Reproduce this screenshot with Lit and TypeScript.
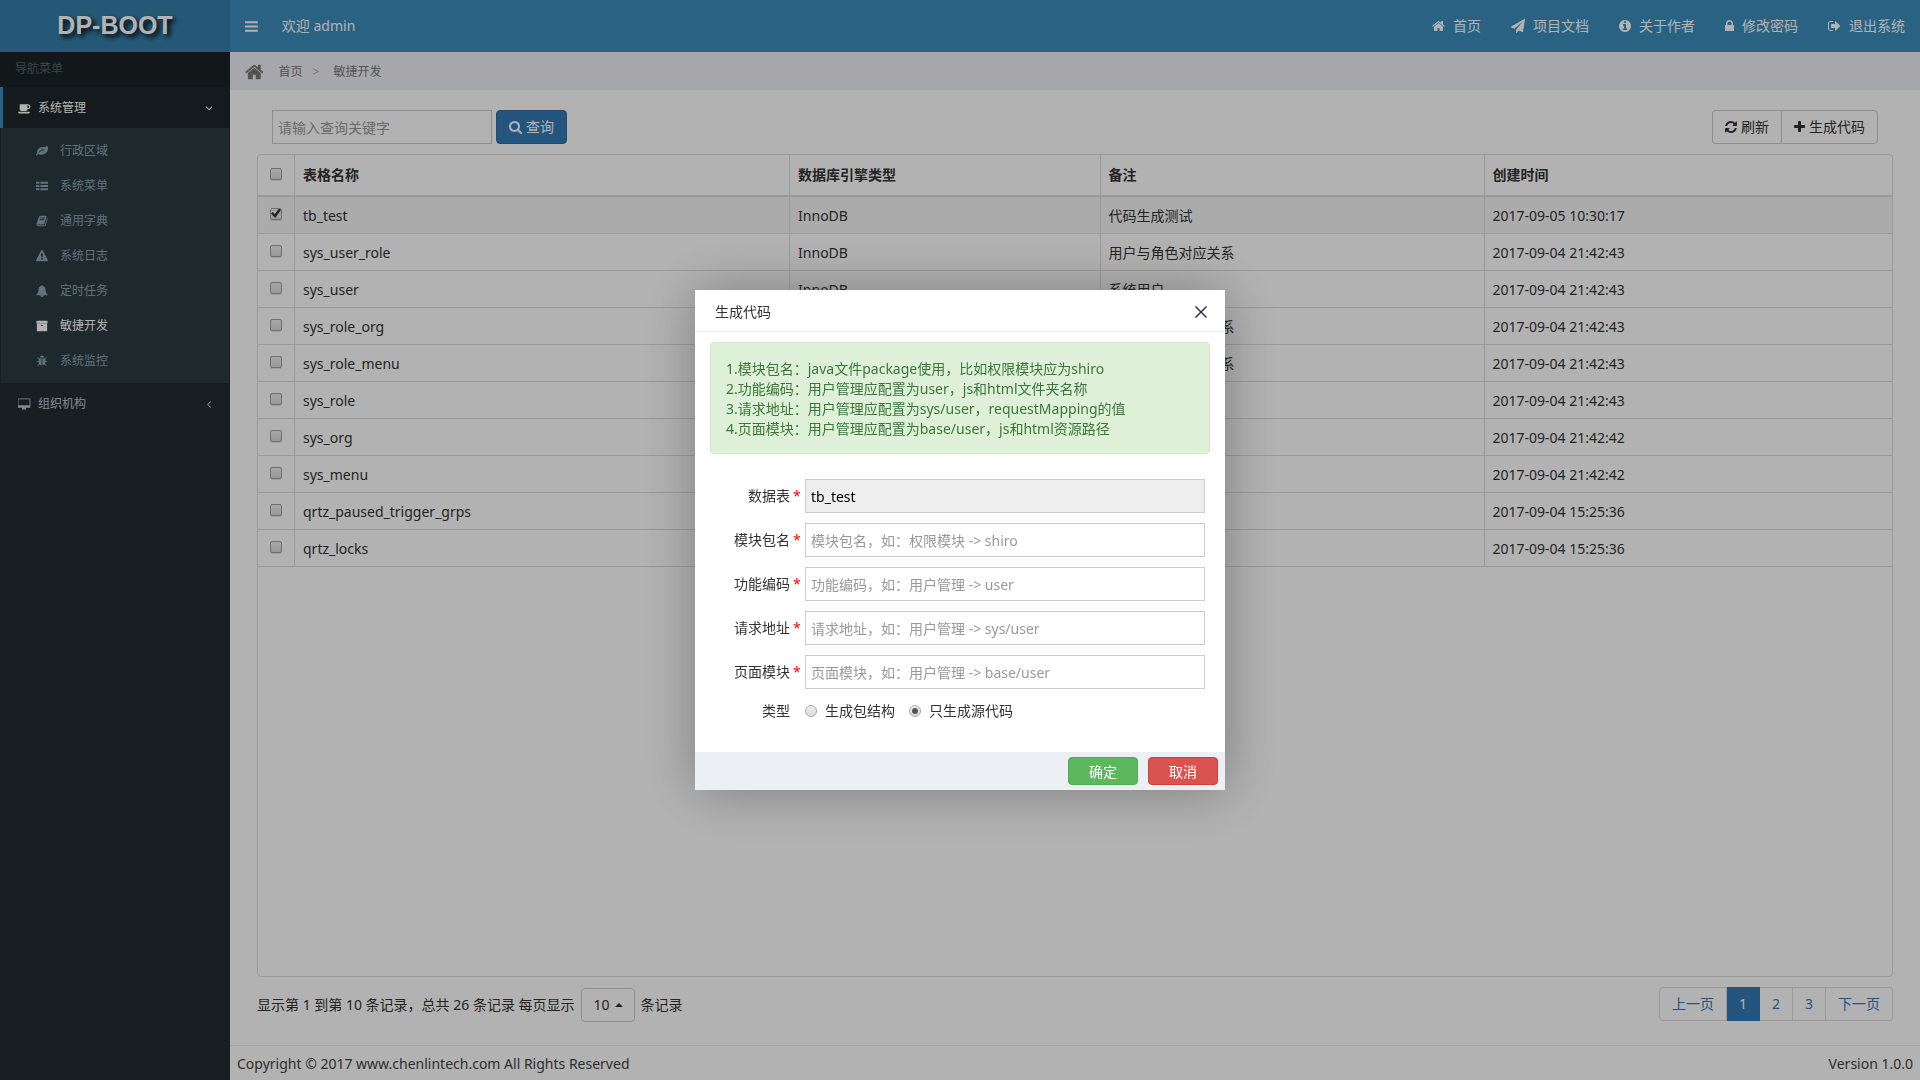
import { LitElement, html, svg, css } from "lit";
import { customElement, property, state } from "lit/decorators.js";
import { classMap } from "lit/directives/class-map.js";

interface Glyph {
  box: string;
  d: string;
}

const SQ = "0 0 1792 1792";
const W13 = "64 0 1664 1792";
const W12 = "128 0 1536 1792";
const WIDE = "0 -64 1920 1792";

const GLYPHS: Record<string, Glyph> = {
  home: { box: W13, d: "M1472 992v480q0 26-19 45t-45 19h-384v-384h-256v384h-384q-26 0-45-19t-19-45v-480q0-1 .5-3t.5-3l575-474 575 474q1 2 1 6zm223-69l-62 74q-8 9-21 11h-3q-13 0-21-7l-692-577-692 577q-12 8-24 7-13-2-21-11l-62-74q-8-10-7-23.5t11-21.5l719-599q32-26 76-26t76 26l244 204v-195q0-14 9-23t23-9h192q14 0 23 9t9 23v408l219 182q10 8 11 21.5t-7 23.5z" },
  bars: { box: W12, d: "M1664 1344v128q0 26-19 45t-45 19h-1408q-26 0-45-19t-19-45v-128q0-26 19-45t45-19h1408q26 0 45 19t19 45zm0-512v128q0 26-19 45t-45 19h-1408q-26 0-45-19t-19-45v-128q0-26 19-45t45-19h1408q26 0 45 19t19 45zm0-512v128q0 26-19 45t-45 19h-1408q-26 0-45-19t-19-45v-128q0-26 19-45t45-19h1408q26 0 45 19t19 45z" },
  plane: { box: SQ, d: "M1764 11q33 24 27 64l-256 1536q-5 29-32 45-14 8-31 8-11 0-24-5l-453-185-242 295q-18 23-49 23-13 0-22-4-19-7-30.5-23.5t-11.5-36.5v-349l864-1059-1069 925-395-162q-37-14-40-55-2-40 32-59l1664-960q15-9 32-9 20 0 36 11z" },
  info: { box: W12, d: "M1152 1376v-160q0-14-9-23t-23-9h-96v-512q0-14-9-23t-23-9h-320q-14 0-23 9t-9 23v160q0 14 9 23t23 9h96v320h-96q-14 0-23 9t-9 23v160q0 14 9 23t23 9h448q14 0 23-9t9-23zm-128-896v-160q0-14-9-23t-23-9h-192q-14 0-23 9t-9 23v160q0 14 9 23t23 9h192q14 0 23-9t9-23zm640 416q0 209-103 385.5t-279.5 279.5-385.5 103-385.5-103-279.5-279.5-103-385.5 103-385.5 279.5-279.5 385.5-103 385.5 103 279.5 279.5 103 385.5z" },
  lock: { box: "320 0 1152 1792", d: "M640 768h512v-192q0-106-75-181t-181-75-181 75-75 181v192zm832 96v576q0 40-28 68t-68 28h-960q-40 0-68-28t-28-68v-576q0-40 28-68t68-28h32v-192q0-184 132-316t316-132 316 132 132 316v192h32q40 0 68 28t28 68z" },
  exit: { box: W13, d: "M704 1440q0 4 1 20t.5 26.5-3 23.5-10 19.5-20.5 6.5h-320q-119 0-203.5-84.5t-84.5-203.5v-704q0-119 84.5-203.5t203.5-84.5h320q13 0 22.5 9.5t9.5 22.5q0 4 1 20t.5 26.5-3 23.5-10 19.5-20.5 6.5h-320q-66 0-113 47t-47 113v704q0 66 47 113t113 47h312l11.5 1 11.5 3 8 5.5 7 9 2 13.5zm928-544q0 26-19 45l-544 544q-19 19-45 19t-45-19-19-45v-288h-448q-26 0-45-19t-19-45v-384q0-26 19-45t45-19h448v-288q0-26 19-45t45-19 45 19l544 544q19 19 19 45z" },
  search: { box: W13, d: "M1216 832q0-185-131.5-316.5t-316.5-131.5-316.5 131.5-131.5 316.5 131.5 316.5 316.5 131.5 316.5-131.5 131.5-316.5zm512 832q0 52-38 90t-90 38q-54 0-90-38l-343-342q-179 124-399 124-143 0-273.5-55.5t-225-150-150-225-55.5-273.5 55.5-273.5 150-225 225-150 273.5-55.5 273.5 55.5 225 150 150 225 55.5 273.5q0 220-124 399l343 343q37 37 37 90z" },
  refresh: { box: W12, d: "M1639 1056q0 5-1 7-64 268-268 434.5t-478 166.5q-146 0-282.5-55t-243.5-157l-129 129q-19 19-45 19t-45-19-19-45v-448q0-26 19-45t45-19h448q26 0 45 19t19 45-19 45l-137 137q71 66 161 102t187 36q134 0 250-65t186-179q11-17 53-117 8-23 30-23h192q13 0 22.5 9.5t9.5 22.5zm25-800v448q0 26-19 45t-45 19h-448q-26 0-45-19t-19-45 19-45l138-138q-148-137-349-137-134 0-250 65t-186 179q-11 17-53 117-8 23-30 23h-199q-13 0-22.5-9.5t-9.5-22.5v-7q65-268 270-434.5t480-166.5q146 0 284 55.5t245 156.5l130-129q19-19 45-19t45 19 19 45z" },
  plus: { box: "192 0 1408 1792", d: "M1600 736v192q0 40-28 68t-68 28h-416v416q0 40-28 68t-68 28h-192q-40 0-68-28t-28-68v-416h-416q-40 0-68-28t-28-68v-192q0-40 28-68t68-28h416v-416q0-40 28-68t68-28h192q40 0 68 28t28 68v416h416q40 0 68 28t28 68z" },
  coffee: { box: WIDE, d: "M1664 640q0-80-56-136t-136-56h-64v384h64q80 0 136-56t56-136zm-1664 768h1792q0 106-75 181t-181 75h-1280q-106 0-181-75t-75-181zm1856-768q0 159-112.5 271.5t-271.5 112.5h-64v32q0 92-66 158t-158 66h-704q-92 0-158-66t-66-158v-736q0-26 19-45t45-19h1152q159 0 271.5 112.5t112.5 271.5z" },
  desktop: { box: WIDE, d: "M1728 992v-832q0-13-9.5-22.5t-22.5-9.5h-1600q-13 0-22.5 9.5t-9.5 22.5v832q0 13 9.5 22.5t22.5 9.5h1600q13 0 22.5-9.5t9.5-22.5zm128-832v1088q0 66-47 113t-113 47h-544q0 37 16 77.5t32 71 16 43.5q0 26-19 45t-45 19h-512q-26 0-45-19t-19-45q0-14 16-44t32-70 16-78h-544q-66 0-113-47t-47-113v-1088q0-66 47-113t113-47h1600q66 0 113 47t47 113z" },
  leaf: { box: SQ, d: "M1280 704q0-26-19-45t-45-19q-172 0-318 49.5t-259.5 134-235.5 219.5q-19 21-19 45 0 26 19 45t45 19q24 0 45-19 27-24 74-71t67-66q137-124 268.5-176t313.5-52q26 0 45-19t19-45zm512-198q0 95-20 193-46 224-184.5 383t-357.5 268q-214 108-438 108-148 0-286-47-15-5-88-42t-96-37q-16 0-39.5 32t-45 70-52.5 70-60 32q-43 0-63.5-17.5t-45.5-59.5q-2-4-6-11t-5.5-10-3-9.5-1.5-13.5q0-35 31-73.5t68-65.5 68-56 31-48q0-4-14-38t-16-44q-9-51-9-104 0-115 43.5-220t119-184.5 170.5-139 204-95.5q55-18 145-25.5t179.5-9 178.5-6 163.5-24 113.5-56.5l29.5-29.5 29.5-28 27-20 36.5-16 43.5-4.5q39 0 70.5 46t47.5 112 24 124 8 96z" },
  list: { box: SQ, d: "M0 256h512v320h-512zM640 256h1152v320h-1152zM0 736h512v320h-512zM640 736h1152v320h-1152zM0 1216h512v320h-512zM640 1216h1152v320h-1152z" },
  book: { box: SQ, d: "M1703 478q40 57 18 129l-275 906q-19 64-76.5 107.5t-122.5 43.5h-923q-77 0-148.5-53.5t-99.5-131.5q-24-67-2-127 0-4 3-27t4-37q1-8-3-21.5t-3-19.5q2-11 8-21t16.5-23.5 16.5-23.5q23-38 45-91.5t30-91.5q3-10 .5-30t-.5-28q3-11 17-28t17-23q21-36 42-92t25-90q1-9-2.5-32t.5-28q4-13 22-30.5t22-22.5q19-26 42.5-84.5t27.5-96.5q1-8-3-25.5t-2-26.5q2-8 9-18t18-23 17-21q8-12 16.5-30.5t15-35 16-36 19.5-32 26.5-23.5 36-11.5 47.5 5.5l-1 3q38-9 51-9h761q74 0 114 56t18 130l-274 906q-36 119-71.5 153.5t-128.5 34.5h-869q-27 0-38 15-11 16-1 43 24 70 144 70h923q29 0 56-15.5t35-41.5l300-987q7-22 5-57 38 15 59 43zm-1064 2q-4 13 2 22.5t20 9.5h608q13 0 25.5-9.5t16.5-22.5l21-64q4-13-2-22.5t-20-9.5h-608q-13 0-25.5 9.5t-16.5 22.5zm-83 256q-4 13 2 22.5t20 9.5h608q13 0 25.5-9.5t16.5-22.5l21-64q4-13-2-22.5t-20-9.5h-608q-13 0-25.5 9.5t-16.5 22.5z" },
  warning: { box: SQ, d: "M1024 1375v-190q0-14-9.5-23.5t-22.5-9.5h-192q-13 0-22.5 9.5t-9.5 23.5v190q0 14 9.5 23.5t22.5 9.5h192q13 0 22.5-9.5t9.5-23.5zm-2-374l18-459q0-12-10-19-13-11-24-11h-220q-11 0-24 11-10 7-10 21l17 457q0 10 10 16.5t24 6.5h185q14 0 23.5-6.5t10.5-16.5zm-14-934l768 1408q35 63-2 126-17 29-46.5 46t-63.5 17h-1536q-34 0-63.5-17t-46.5-46q-37-63-2-126l768-1408q17-31 47-49t65-18 65 18 47 49z" },
  bell: { box: SQ, d: "M912 1696q0-16-16-16-59 0-101.5-42.5t-42.5-101.5q0-16-16-16t-16 16q0 73 51.5 124.5t124.5 51.5q16 0 16-16zm816-288q0 52-38 90t-90 38h-448q0 106-75 181t-181 75-181-75-75-181h-448q-52 0-90-38t-38-90q50-42 91-88t85-119.5 74.5-158.5 50-206 19.5-260q0-152 117-282.5t307-158.5q-8-19-8-39 0-40 28-68t68-28 68 28 28 68q0 20-8 39 190 28 307 158.5t117 282.5q0 139 19.5 260t50 206 74.5 158.5 85 119.5 91 88z" },
  archive: { box: SQ, d: "M1088 832q0-26-19-45t-45-19h-256q-26 0-45 19t-19 45 19 45 45 19h256q26 0 45-19t19-45zm576-192v960q0 26-19 45t-45 19h-1408q-26 0-45-19t-19-45v-960q0-26 19-45t45-19h1408q26 0 45 19t19 45zm64-448v256q0 26-19 45t-45 19h-1536q-26 0-45-19t-19-45v-256q0-26 19-45t45-19h1536q26 0 45 19t19 45z" },
  bug: { box: SQ, d: "M1696 960q0 26-19 45t-45 19h-224q0 171-67 290l208 209q19 19 19 45t-19 45q-18 19-45 19t-45-19l-198-197q-5 5-15 13t-42 28.5-65 36.5-82 29-97 13v-896h-128v896q-51 0-101.5-13.5t-87-33-66-39-43.5-32.5l-15-14-183 207q-20 21-48 21-24 0-43-16-19-18-20.5-44.5t15.5-46.5l202-227q-58-114-58-274h-224q-26 0-45-19t-19-45 19-45 45-19h224v-294l-173-173q-19-19-19-45t19-45 45-19 45 19l173 173h844l173-173q19-19 45-19t45 19 19 45-19 45l-173 173v294h224q26 0 45 19t19 45zm-480-576h-640q0-133 93.5-226.5t226.5-93.5 226.5 93.5 93.5 226.5z" },
  down: { box: SQ, d: "M1395 736q0 13-10 23l-466 466q-10 10-23 10t-23-10l-466-466q-10-10-10-23t10-23l50-50q10-10 23-10t23 10l393 393 393-393q10-10 23-10t23 10l50 50q10 10 10 23z" },
  left: { box: SQ, d: "M1203 544q0 13-10 23l-393 393 393 393q10 10 10 23t-10 23l-50 50q-10 10-23 10t-23-10l-466-466q-10-10-10-23t10-23l466-466q10-10 23-10t23 10l50 50q10 10 10 23z" },
  close: { box: "0 0 12 12", d: "M0 1L1 0L6 5L11 0L12 1L7 6L12 11L11 12L6 7L1 12L0 11L5 6Z" },
  caret: { box: "0 0 8 4", d: "M0 4L4 0L8 4Z" },
};

@customElement("ui-icon")
export class UiIcon extends LitElement {
  static styles = css`
    :host {
      display: inline-flex;
      flex: none;
      justify-content: center;
      height: 14px;
    }
    .glyph {
      flex: none;
      height: 100%;
      fill: currentColor;
    }
  `;

  @property() name = "";

  render() {
    const g = GLYPHS[this.name];
    return html`<svg class="glyph" viewBox=${g.box} aria-hidden="true">${svg`<path d=${g.d}></path>`}</svg>`;
  }
}

const TEXT_FONT = css`"Noto Sans", "Noto Sans CJK SC", sans-serif`;

@customElement("app-sidebar")
export class AppSidebar extends LitElement {
  static styles = css`
    :host {
      display: flex;
      flex-direction: column;
      background: #222d32;
      color: #b8c7ce;
      font: 12px/20px ${TEXT_FONT};
    }
    .logo {
      height: 52px;
      background: #367fa9;
      color: #fff;
      font: bold 25px/50px "Liberation Sans", sans-serif;
      text-align: center;
      text-decoration: none;
      text-shadow: 3px 3px 5px #000;
    }
    .caption {
      padding: 7px 15px 8px;
      background: #1a2226;
      color: #4b646f;
    }
    .group {
      display: flex;
      align-items: center;
      gap: 7px;
      padding: 11px 15px 10px;
      border-left: 3px solid transparent;
      color: inherit;
      text-decoration: none;
    }
    .group.open {
      background: #1e282c;
      border-left-color: #3c8dbc;
      color: #fff;
    }
    .fold {
      height: 12px;
      margin-left: auto;
    }
    .items {
      margin: 0 1px;
      padding: 5px 0;
      list-style: none;
      background: #2c3b41;
    }
    .item {
      display: flex;
      align-items: center;
      gap: 11px;
      height: 35px;
      padding-left: 34px;
      color: #8aa4af;
      text-decoration: none;
    }
    .item.active {
      color: #fff;
    }
    .mark {
      width: 13px;
      height: 12px;
    }
    .small {
      width: 14px;
      height: 12px;
    }
  `;

  private items = [
    ["leaf", "行政区域"],
    ["list", "系统菜单"],
    ["book", "通用字典"],
    ["warning", "系统日志"],
    ["bell", "定时任务"],
    ["archive", "敏捷开发"],
    ["bug", "系统监控"],
  ];

  render() {
    return html`
      <a class="logo" href="#">DP-BOOT</a>
      <div class="caption">导航菜单</div>
      <nav>
        <a class="group open" href="#"><ui-icon class="mark" name="coffee"></ui-icon>系统管理<ui-icon class="fold" name="down"></ui-icon></a>
        <ul class="items">
          ${this.items.map(
            ([icon, label]) => html`<li>
              <a class=${classMap({ item: true, active: label === "敏捷开发" })} href="#"><ui-icon class="small" name=${icon}></ui-icon>${label}</a>
            </li>`,
          )}
        </ul>
        <a class="group" href="#"><ui-icon class="mark" name="desktop"></ui-icon>组织机构<ui-icon class="fold" name="left"></ui-icon></a>
      </nav>
    `;
  }
}

@customElement("app-topbar")
export class AppTopbar extends LitElement {
  static styles = css`
    :host {
      display: flex;
      align-items: center;
      height: 52px;
      padding: 0 15px;
      background: #3c8dbc;
      color: #fff;
      font: 14px/20px ${TEXT_FONT};
    }
    .toggle {
      display: flex;
      margin: 0 24px 0 0;
      padding: 0;
      border: 0;
      background: none;
      color: inherit;
    }
    .burger {
      height: 15px;
    }
    .links {
      display: flex;
      gap: 30px;
      margin-left: auto;
    }
    .link {
      display: flex;
      align-items: center;
      gap: 8px;
      color: inherit;
      text-decoration: none;
    }
  `;

  private links = [
    ["home", "首页"],
    ["plane", "项目文档"],
    ["info", "关于作者"],
    ["lock", "修改密码"],
    ["exit", "退出系统"],
  ];

  render() {
    return html`
      <button class="toggle" type="button" aria-label="菜单"><ui-icon class="burger" name="bars"></ui-icon></button>
      <span>欢迎 admin</span>
      <nav class="links">
        ${this.links.map(([icon, label]) => html`<a class="link" href="#"><ui-icon name=${icon}></ui-icon>${label}</a>`)}
      </nav>
    `;
  }
}

interface Row {
  name: string;
  note: string;
  time: string;
}

@customElement("table-list")
export class TableList extends LitElement {
  static styles = css`
    :host {
      display: flex;
      flex-direction: column;
      gap: 10px;
      padding: 20px 27px 22px;
      color: #333;
      font: 14px/20px ${TEXT_FONT};
    }
    .bar {
      display: flex;
      align-items: center;
      gap: 4px;
      padding: 0 15px;
    }
    .query {
      box-sizing: border-box;
      width: 220px;
      height: 34px;
      padding: 0 5px;
      border: 1px solid #ccc;
      background: #fff;
      font: inherit;
    }
    .query::placeholder {
      color: #999;
    }
    .btn {
      display: flex;
      align-items: center;
      gap: 4px;
      height: 34px;
      padding: 0 12px;
      border: 1px solid #ccc;
      background: #fff;
      color: #333;
      font: inherit;
    }
    .btn.primary {
      border-color: #2e6da4;
      border-radius: 4px;
      background: #337ab7;
      color: #fff;
    }
    .tools {
      display: flex;
      margin-left: auto;
    }
    .btn.first {
      border-right: 0;
      border-radius: 4px 0 0 4px;
    }
    .btn.last {
      border-radius: 0 4px 4px 0;
    }
    .panel {
      flex: 1;
      border: 1px solid #ddd;
      border-radius: 4px;
    }
    .grid {
      width: 100%;
      table-layout: fixed;
      border-collapse: separate;
      border-spacing: 0;
    }
    .cell {
      box-sizing: border-box;
      padding: 9px 8px 7px;
      border-right: 1px solid #ddd;
      border-bottom: 1px solid #ddd;
      text-align: left;
    }
    .cell:last-child {
      border-right: 0;
    }
    .head {
      padding: 10px 8px;
      border-bottom-width: 2px;
    }
    .pick {
      width: 37px;
      padding: 0;
      text-align: center;
    }
    .w-name {
      width: 30.3%;
    }
    .w-engine {
      width: 19%;
    }
    .w-note {
      width: 23.5%;
    }
    .chosen {
      background: #f5f5f5;
    }
    .check {
      display: grid;
      place-items: center;
      appearance: none;
      box-sizing: border-box;
      width: 12px;
      height: 12px;
      margin: 0 auto 3px;
      border: 1px solid #a0a0a0;
      border-radius: 2px;
      background: linear-gradient(#eee, #dcdcdc);
      box-shadow: 0 1px 0 rgba(0, 0, 0, 0.1);
    }
    .check:checked::before {
      content: "";
      width: 10px;
      height: 10px;
      background: #333;
      clip-path: polygon(0 50%, 18% 35%, 38% 58%, 80% 0, 100% 16%, 42% 95%);
    }
    .foot {
      display: flex;
      align-items: flex-start;
      justify-content: space-between;
      height: 36px;
    }
    .summary {
      display: flex;
      align-items: center;
      gap: 6px;
      height: 36px;
    }
    .size {
      display: grid;
      grid-template-columns: 1fr 20px;
      align-items: center;
      width: 54px;
      height: 34px;
      box-sizing: border-box;
    }
    .count {
      grid-area: 1 / 1 / 2 / 3;
      appearance: none;
      box-sizing: border-box;
      width: 100%;
      height: 34px;
      padding: 0 12px;
      border: 1px solid #ccc;
      border-radius: 4px;
      background: #fff;
      color: #333;
      font: inherit;
    }
    .caret {
      grid-area: 1 / 2 / 2 / 3;
      width: 8px;
      height: 4px;
      pointer-events: none;
    }
    .pages {
      display: flex;
      margin: 0;
      padding: 0;
      list-style: none;
    }
    .page {
      display: block;
      padding: 6px 12px;
      border: 1px solid #ddd;
      border-left-width: 0;
      background: #fff;
      color: #337ab7;
      text-decoration: none;
    }
    .page.prev {
      border-left-width: 1px;
      border-radius: 4px 0 0 4px;
    }
    .page.next {
      border-radius: 0 4px 4px 0;
    }
    .page.current {
      border-color: #337ab7;
      background: #337ab7;
      color: #fff;
    }
  `;

  @state() private rows: Row[] = [
    { name: "tb_test", note: "代码生成测试", time: "2017-09-05 10:30:17" },
    { name: "sys_user_role", note: "用户与角色对应关系", time: "2017-09-04 21:42:43" },
    { name: "sys_user", note: "系统用户", time: "2017-09-04 21:42:43" },
    { name: "sys_role_org", note: "角色与机构对应关系", time: "2017-09-04 21:42:43" },
    { name: "sys_role_menu", note: "角色与菜单对应关系", time: "2017-09-04 21:42:43" },
    { name: "sys_role", note: "系统角色", time: "2017-09-04 21:42:43" },
    { name: "sys_org", note: "组织机构", time: "2017-09-04 21:42:42" },
    { name: "sys_menu", note: "系统菜单", time: "2017-09-04 21:42:42" },
    { name: "qrtz_paused_trigger_grps", note: "", time: "2017-09-04 15:25:36" },
    { name: "qrtz_locks", note: "", time: "2017-09-04 15:25:36" },
  ];

  render() {
    return html`
      <div class="bar">
        <input class="query" type="text" placeholder="请输入查询关键字" aria-label="查询关键字" />
        <button class="btn primary" type="button"><ui-icon name="search"></ui-icon>查询</button>
        <div class="tools">
          <button class="btn first" type="button"><ui-icon name="refresh"></ui-icon>刷新</button>
          <button class="btn last" type="button"><ui-icon name="plus"></ui-icon>生成代码</button>
        </div>
      </div>
      <div class="panel">
        <table class="grid">
          <thead>
            <tr>
              <th class="cell head pick"><input class="check" type="checkbox" aria-label="全选" /></th>
              <th class="cell head w-name">表格名称</th>
              <th class="cell head w-engine">数据库引擎类型</th>
              <th class="cell head w-note">备注</th>
              <th class="cell head">创建时间</th>
            </tr>
          </thead>
          <tbody>
            ${this.rows.map(
              (r, i) => html`<tr class=${classMap({ chosen: i === 0 })}>
                <td class="cell pick"><input class="check" type="checkbox" aria-label=${r.name} ?checked=${i === 0} /></td>
                <td class="cell">${r.name}</td>
                <td class="cell">InnoDB</td>
                <td class="cell">${r.note}</td>
                <td class="cell">${r.time}</td>
              </tr>`,
            )}
          </tbody>
        </table>
      </div>
      <div class="foot">
        <div class="summary">
          <label for="count">显示第 1 到第 10 条记录，总共 26 条记录 每页显示</label>
          <span class="size">
            <select class="count" id="count"><option>10</option></select>
            <ui-icon class="caret" name="caret"></ui-icon>
          </span>
          <span>条记录</span>
        </div>
        <ul class="pages">
          <li><a class="page prev" href="#">上一页</a></li>
          <li><a class="page current" href="#">1</a></li>
          <li><a class="page" href="#">2</a></li>
          <li><a class="page" href="#">3</a></li>
          <li><a class="page next" href="#">下一页</a></li>
        </ul>
      </div>
    `;
  }
}

@customElement("code-dialog")
export class CodeDialog extends LitElement {
  static styles = css`
    :host {
      display: block;
      width: 530px;
      background: #fff;
      box-shadow: 1px 1px 50px rgba(0, 0, 0, 0.3);
      color: #333;
      font: 14px/20px ${TEXT_FONT};
    }
    .top {
      display: flex;
      align-items: center;
      justify-content: space-between;
      padding: 12px 18px 9px 20px;
      border-bottom: 1px solid #eee;
    }
    .title {
      margin: 0;
      font: inherit;
    }
    .x {
      display: flex;
      padding: 0;
      border: 0;
      background: none;
      color: #2e2d3c;
    }
    .cross {
      height: 12px;
    }
    .tips {
      margin: 10px 15px 25px;
      padding: 16px 15px 14px;
      border: 1px solid #d6e9c6;
      border-radius: 4px;
      background: #dff0d8;
      color: #3c763d;
    }
    .tip {
      margin: 0;
    }
    .form {
      display: flex;
      flex-direction: column;
      gap: 10px;
      padding: 0 20px 29px 15px;
    }
    .row {
      display: grid;
      grid-template-columns: 80px 15px 1fr;
      align-items: center;
    }
    .label {
      text-align: right;
    }
    .star {
      padding-left: 3px;
      color: #f00;
    }
    .box {
      box-sizing: border-box;
      width: 100%;
      height: 34px;
      padding: 0 5px;
      border: 1px solid #ccc;
      background: #fff;
      color: #000;
      font: inherit;
    }
    .box::placeholder {
      color: #999;
    }
    .box:read-only {
      background: #eee;
    }
    .options {
      display: flex;
      gap: 14px;
      height: 24px;
    }
    .option {
      display: flex;
      align-items: center;
      gap: 8px;
    }
    .radio {
      display: grid;
      place-items: center;
      appearance: none;
      box-sizing: border-box;
      width: 12px;
      height: 12px;
      margin: 0;
      border: 1px solid #a8a8a8;
      border-radius: 50%;
      background: linear-gradient(#eee, #dcdcdc);
    }
    .radio:checked::before {
      content: "";
      width: 6px;
      height: 6px;
      border-radius: 50%;
      background: #555;
    }
    .actions {
      display: flex;
      justify-content: flex-end;
      gap: 10px;
      padding: 5px 7px;
      background: #ecf0f5;
    }
    .act {
      width: 70px;
      height: 28px;
      padding: 2px 0 0;
      border: 1px solid #4cae4c;
      border-radius: 4px;
      background: #5cb85c;
      color: #fff;
      font: inherit;
    }
    .act.cancel {
      border-color: #d43f3a;
      background: #d9534f;
    }
  `;

  private fields = [
    { id: "table", label: "数据表", value: "tb_test", hint: "" },
    { id: "pkg", label: "模块包名", value: "", hint: "模块包名，如：权限模块 -> shiro" },
    { id: "func", label: "功能编码", value: "", hint: "功能编码，如：用户管理 -> user" },
    { id: "url", label: "请求地址", value: "", hint: "请求地址，如：用户管理 -> sys/user" },
    { id: "page", label: "页面模块", value: "", hint: "页面模块，如：用户管理 -> base/user" },
  ];

  render() {
    return html`
      <header class="top">
        <h2 class="title">生成代码</h2>
        <button class="x" type="button" aria-label="关闭"><ui-icon class="cross" name="close"></ui-icon></button>
      </header>
      <div class="tips">
        <p class="tip">1.模块包名：java文件package使用，比如权限模块应为shiro</p>
        <p class="tip">2.功能编码：用户管理应配置为user，js和html文件夹名称</p>
        <p class="tip">3.请求地址：用户管理应配置为sys/user，requestMapping的值</p>
        <p class="tip">4.页面模块：用户管理应配置为base/user，js和html资源路径</p>
      </div>
      <form class="form">
        ${this.fields.map(
          (f) => html`<div class="row">
            <label class="label" for=${f.id}>${f.label}</label>
            <span class="star">*</span>
            <input class="box" id=${f.id} type="text" .value=${f.value} placeholder=${f.hint} ?readonly=${f.id === "table"} />
          </div>`,
        )}
        <div class="row" role="radiogroup" aria-labelledby="kind">
          <span class="label" id="kind">类型</span>
          <span></span>
          <div class="options">
            <label class="option"><input class="radio" type="radio" name="kind" />生成包结构</label>
            <label class="option"><input class="radio" type="radio" name="kind" checked />只生成源代码</label>
          </div>
        </div>
      </form>
      <footer class="actions">
        <button class="act" type="button">确定</button>
        <button class="act cancel" type="button">取消</button>
      </footer>
    `;
  }
}

@customElement("app-root")
export class AppRoot extends LitElement {
  static styles = css`
    :host {
      display: block;
      font: 14px/20px ${TEXT_FONT};
    }
    .page {
      display: grid;
      grid-template-columns: 230px 1fr;
      min-height: 100vh;
      background: #fff;
    }
    .main {
      display: flex;
      flex-direction: column;
      min-width: 0;
    }
    .crumbs {
      display: flex;
      align-items: center;
      padding: 10px 15px 8px;
      background: #ecf0f5;
      color: #777;
      font-size: 12px;
    }
    .house {
      height: 20px;
      margin-right: 15px;
    }
    .crumb {
      color: inherit;
      text-decoration: none;
    }
    .sep {
      padding: 0 14px 0 10px;
      color: #aaa;
    }
    .list {
      flex: 1;
    }
    .footer {
      display: flex;
      justify-content: space-between;
      padding: 8px 7px 6px;
      border-top: 1px solid #eee;
      color: #444;
    }
    .shade {
      position: fixed;
      inset: 0;
      display: flex;
      align-items: center;
      justify-content: center;
      background: rgba(0, 0, 0, 0.3);
    }
  `;

  render() {
    return html`
      <div class="page">
        <app-sidebar></app-sidebar>
        <div class="main">
          <app-topbar></app-topbar>
          <nav class="crumbs">
            <ui-icon class="house" name="home"></ui-icon>
            <a class="crumb" href="#">首页</a>
            <span class="sep">&gt;</span>
            <a class="crumb" href="#">敏捷开发</a>
          </nav>
          <table-list class="list"></table-list>
          <footer class="footer">
            <span>Copyright © 2017 www.chenlintech.com All Rights Reserved</span>
            <span>Version 1.0.0</span>
          </footer>
        </div>
      </div>
      <div class="shade">
        <code-dialog role="dialog" aria-label="生成代码"></code-dialog>
      </div>
    `;
  }
}
